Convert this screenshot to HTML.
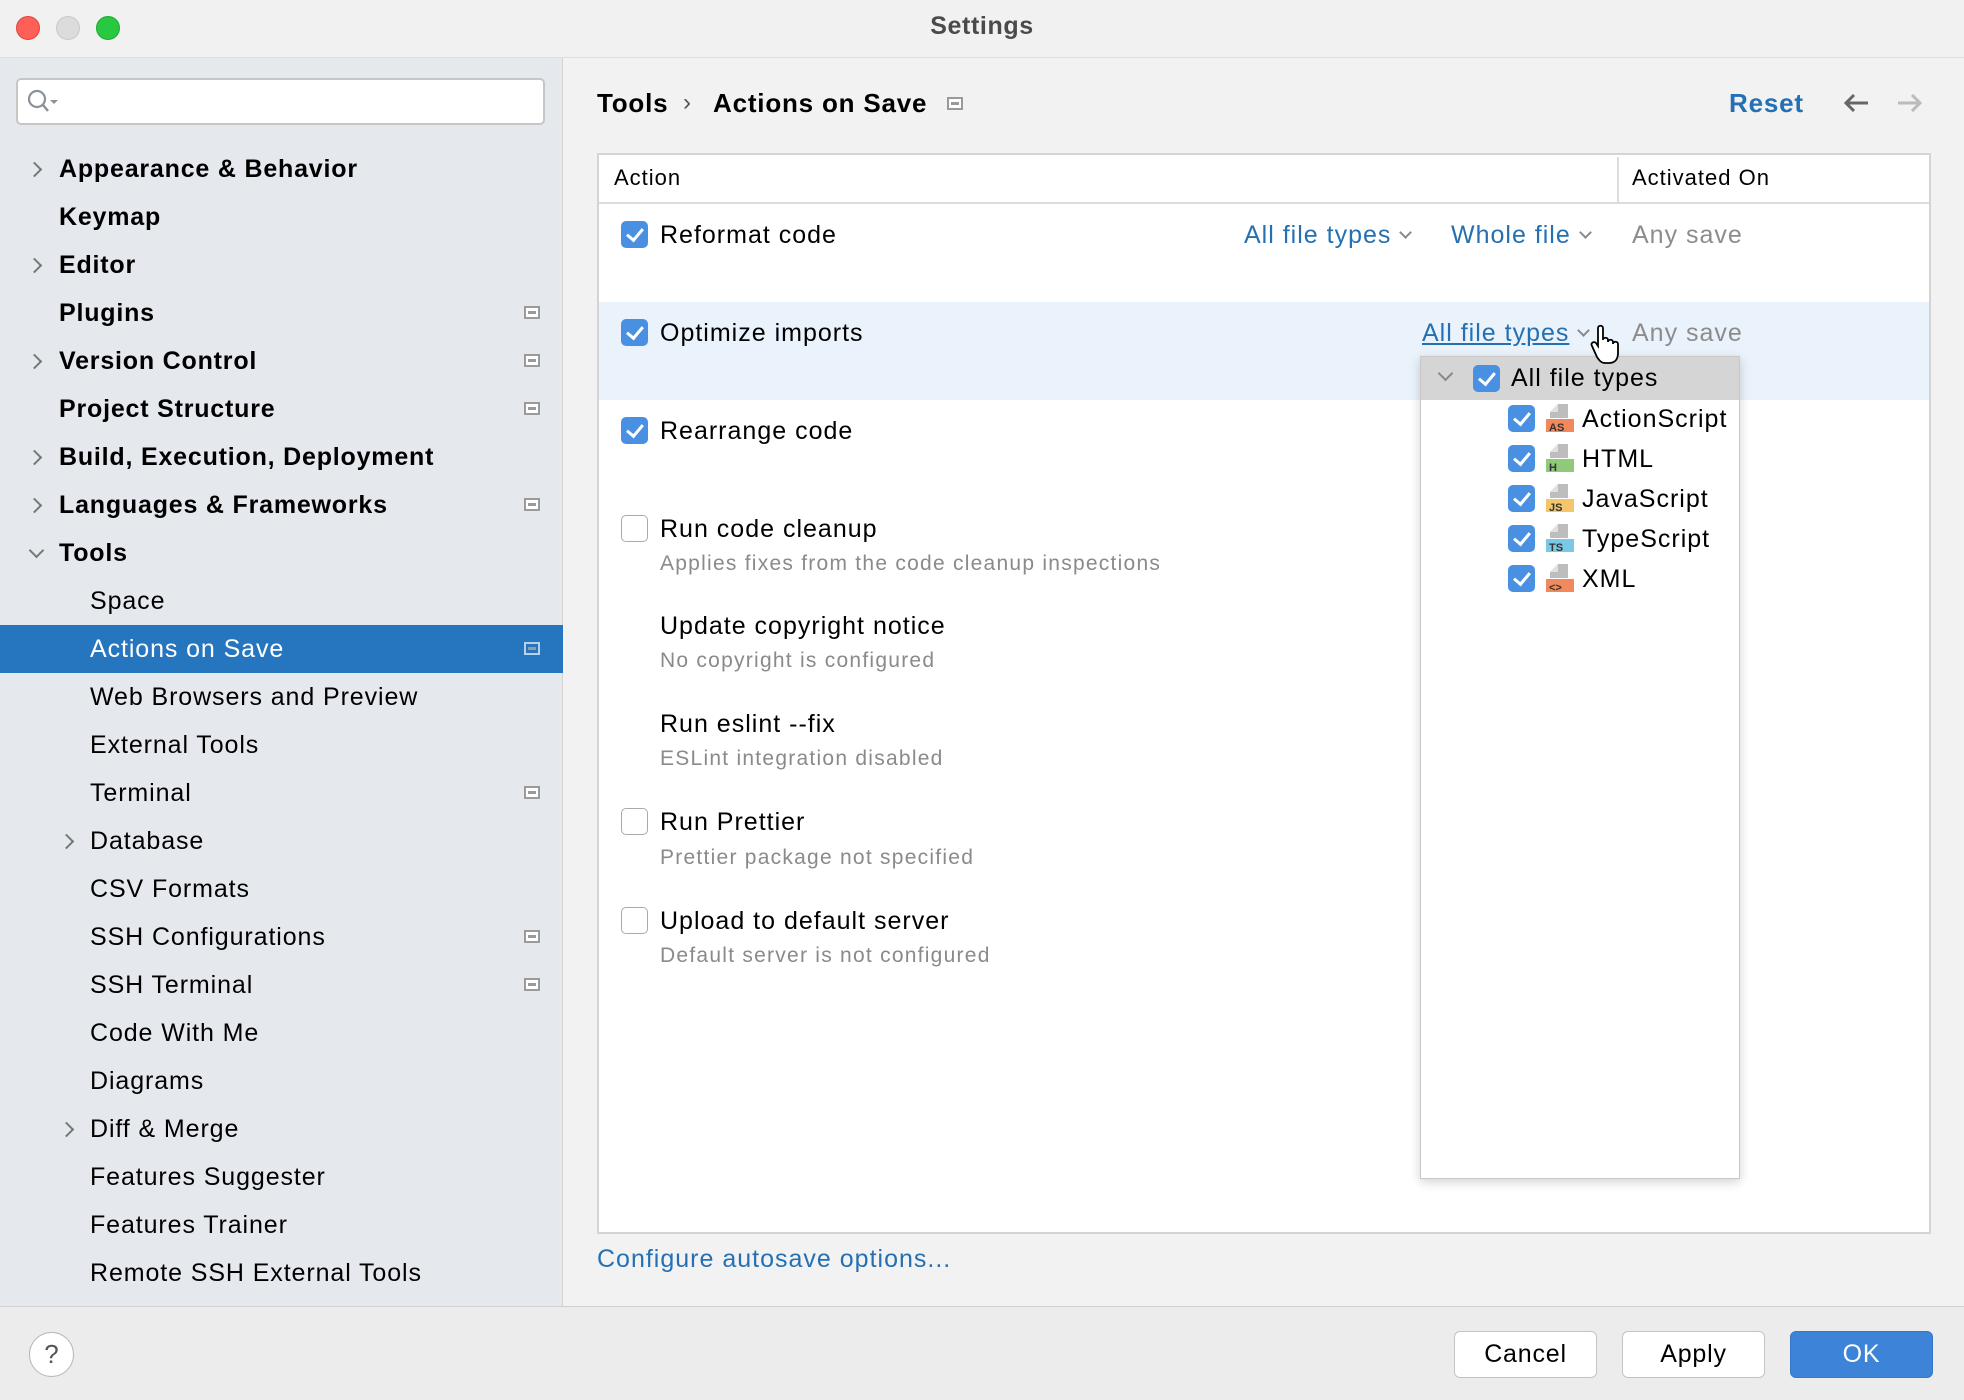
<!DOCTYPE html>
<html><head><meta charset="utf-8"><style>
*{margin:0;padding:0;box-sizing:border-box}
body{width:1964px;height:1400px;overflow:hidden;background:#f2f2f2;font-family:"Liberation Sans",sans-serif;position:relative;color:#000}
.a{position:absolute;white-space:nowrap}
.side{position:absolute;left:0;top:58px;width:563px;height:1248px;background:#e5e9ee;border-right:1px solid #d4d4d4}
.si{font-size:25px;line-height:40px;letter-spacing:0.9px}
.b{font-weight:bold;letter-spacing:0.8px}
.chev{position:absolute;width:11px;height:11px;border-right:2px solid #777;border-bottom:2px solid #777}
.ri{position:absolute;left:524px;width:16px;height:13px;border:2px solid #9a9a9a;background:#fff}
.ri::after{content:"";position:absolute;left:2px;right:2px;top:3px;height:3px;background:#9a9a9a}
.cb{position:absolute;width:27px;height:27px;border-radius:5px;background:#4a90e2}
.cb::after{content:"";position:absolute;left:9px;top:4px;width:7px;height:13px;border-right:3px solid #fff;border-bottom:3px solid #fff;transform:rotate(40deg)}
.cbo{position:absolute;width:27px;height:27px;border-radius:5px;background:#fff;border:1.5px solid #aaa}
.rt{font-size:25px;line-height:40px;letter-spacing:1px}
.sub{font-size:21px;color:#8a8a8a;line-height:30px;letter-spacing:1.25px}
.lnk{color:#2470b3;font-size:25px;line-height:40px;letter-spacing:1px}
.gray{color:#8c8c8c;font-size:25px;line-height:40px;letter-spacing:1px}
.dd{display:inline-block;width:9px;height:9px;border-right:2px solid #8a8a8a;border-bottom:2px solid #8a8a8a;transform:rotate(45deg);margin-left:10px;position:relative;top:-6px}
.btn{position:absolute;top:1331px;height:47px;width:143px;border:1px solid #c4c4c4;border-radius:6px;background:#fff;font-size:25px;text-align:center;line-height:45px;letter-spacing:0.8px}
.fi{position:absolute;width:28px;height:28px}
</style></head><body>
<div class="a" style="left:0;top:0;width:1964px;height:58px;background:#f1f1f1;border-bottom:1px solid #ddd"></div>
<div class="a" style="left:16px;top:16px;width:24px;height:24px;border-radius:50%;background:#fe5f57;border:1px solid #e0443e"></div>
<div class="a" style="left:56px;top:16px;width:24px;height:24px;border-radius:50%;background:#dcdcdc;border:1px solid #c8c8c8"></div>
<div class="a" style="left:96px;top:16px;width:24px;height:24px;border-radius:50%;background:#28c840;border:1px solid #1eaa33"></div>
<div class="a" style="left:0;width:1964px;top:8px;text-align:center;font-size:25px;font-weight:bold;color:#4a4a4a;line-height:36px;letter-spacing:0.6px">Settings</div>

<div class="side"></div>
<div class="a" style="left:16px;top:78px;width:529px;height:47px;background:#fff;border:2px solid #c6c6c6;border-radius:5px"></div>
<svg class="a" style="left:26px;top:88px" width="36" height="28" viewBox="0 0 36 28"><circle cx="11" cy="11" r="8" fill="none" stroke="#8a9299" stroke-width="2.2"/><line x1="17" y1="17" x2="22" y2="23" stroke="#8a9299" stroke-width="2.5"/><path d="M24 12h8l-4 4z" fill="#8a9299"/></svg>

<div class="a" style="left:0;top:625px;width:563px;height:48px;background:#2675bf"></div>

<div class="chev" style="left:29px;top:164px;transform:rotate(-45deg)"></div>
<div class="a si b" style="left:59px;top:149px">Appearance &amp; Behavior</div>
<div class="a si b" style="left:59px;top:197px">Keymap</div>
<div class="chev" style="left:29px;top:260px;transform:rotate(-45deg)"></div>
<div class="a si b" style="left:59px;top:245px">Editor</div>
<div class="a si b" style="left:59px;top:293px">Plugins</div><div class="ri" style="top:306px"></div>
<div class="chev" style="left:29px;top:356px;transform:rotate(-45deg)"></div>
<div class="a si b" style="left:59px;top:341px">Version Control</div><div class="ri" style="top:354px"></div>
<div class="a si b" style="left:59px;top:389px">Project Structure</div><div class="ri" style="top:402px"></div>
<div class="chev" style="left:29px;top:452px;transform:rotate(-45deg)"></div>
<div class="a si b" style="left:59px;top:437px">Build, Execution, Deployment</div>
<div class="chev" style="left:29px;top:500px;transform:rotate(-45deg)"></div>
<div class="a si b" style="left:59px;top:485px">Languages &amp; Frameworks</div><div class="ri" style="top:498px"></div>
<div class="chev" style="left:31px;top:545px;transform:rotate(45deg)"></div>
<div class="a si b" style="left:59px;top:533px">Tools</div>
<div class="a si" style="left:90px;top:581px">Space</div>
<div class="a si" style="left:90px;top:629px;color:#fff">Actions on Save</div><div class="ri" style="top:642px;border-color:#b8d0ea;background:#2675bf"></div>
<div class="a si" style="left:90px;top:677px">Web Browsers and Preview</div>
<div class="a si" style="left:90px;top:725px">External Tools</div>
<div class="a si" style="left:90px;top:773px">Terminal</div><div class="ri" style="top:786px"></div>
<div class="chev" style="left:61px;top:836px;transform:rotate(-45deg)"></div>
<div class="a si" style="left:90px;top:821px">Database</div>
<div class="a si" style="left:90px;top:869px">CSV Formats</div>
<div class="a si" style="left:90px;top:917px">SSH Configurations</div><div class="ri" style="top:930px"></div>
<div class="a si" style="left:90px;top:965px">SSH Terminal</div><div class="ri" style="top:978px"></div>
<div class="a si" style="left:90px;top:1013px">Code With Me</div>
<div class="a si" style="left:90px;top:1061px">Diagrams</div>
<div class="chev" style="left:61px;top:1124px;transform:rotate(-45deg)"></div>
<div class="a si" style="left:90px;top:1109px">Diff &amp; Merge</div>
<div class="a si" style="left:90px;top:1157px">Features Suggester</div>
<div class="a si" style="left:90px;top:1205px">Features Trainer</div>
<div class="a si" style="left:90px;top:1253px">Remote SSH External Tools</div>

<div class="a b" style="left:597px;top:83px;font-size:26px;line-height:40px">Tools</div>
<div class="a" style="left:683px;top:83px;font-size:24px;line-height:40px;color:#555">›</div>
<div class="a b" style="left:713px;top:83px;font-size:26px;line-height:40px">Actions on Save</div>
<div class="ri" style="left:947px;top:97px"></div>
<div class="a b" style="left:1729px;top:83px;font-size:26px;line-height:40px;color:#2470b3">Reset</div>
<svg class="a" style="left:1842px;top:92px" width="28" height="22" viewBox="0 0 28 22"><path d="M26 11H4M12 3l-8 8 8 8" fill="none" stroke="#666" stroke-width="3"/></svg>
<svg class="a" style="left:1896px;top:92px" width="28" height="22" viewBox="0 0 28 22"><path d="M2 11h22M16 3l8 8-8 8" fill="none" stroke="#bbb" stroke-width="3"/></svg>

<div class="a" style="left:597px;top:153px;width:1334px;height:1081px;background:#fff;border:2px solid #d4d4d4"></div>
<div class="a" style="left:599px;top:202px;width:1330px;height:2px;background:#dcdcdc"></div>
<div class="a" style="left:1617px;top:157px;width:2px;height:45px;background:#ddd"></div>
<div class="a" style="left:614px;top:158px;font-size:22px;line-height:40px;letter-spacing:1px">Action</div>
<div class="a" style="left:1632px;top:158px;font-size:22px;line-height:40px;letter-spacing:1px">Activated On</div>
<div class="a" style="left:599px;top:302px;width:1330px;height:98px;background:#eaf2fb"></div>

<div class="cb" style="left:621px;top:221px"></div><div class="a rt" style="left:660px;top:215px">Reformat code</div>
<div class="a lnk" style="left:1244px;top:215px">All file types<span class="dd"></span></div>
<div class="a lnk" style="left:1451px;top:215px">Whole file<span class="dd"></span></div>
<div class="a gray" style="left:1632px;top:215px">Any save</div>

<div class="cb" style="left:621px;top:319px"></div><div class="a rt" style="left:660px;top:313px">Optimize imports</div>
<div class="a lnk" style="left:1422px;top:313px;text-decoration:underline">All file types<span class="dd"></span></div>
<div class="a gray" style="left:1632px;top:313px">Any save</div>

<div class="cb" style="left:621px;top:417px"></div><div class="a rt" style="left:660px;top:411px">Rearrange code</div>
<div class="cbo" style="left:621px;top:515px"></div><div class="a rt" style="left:660px;top:509px">Run code cleanup</div>
<div class="a sub" style="left:660px;top:549px">Applies fixes from the code cleanup inspections</div>
<div class="a rt" style="left:660px;top:606px">Update copyright notice</div>
<div class="a sub" style="left:660px;top:646px">No copyright is configured</div>
<div class="a rt" style="left:660px;top:704px">Run eslint --fix</div>
<div class="a sub" style="left:660px;top:744px">ESLint integration disabled</div>
<div class="cbo" style="left:621px;top:808px"></div><div class="a rt" style="left:660px;top:802px">Run Prettier</div>
<div class="a sub" style="left:660px;top:843px">Prettier package not specified</div>
<div class="cbo" style="left:621px;top:907px"></div><div class="a rt" style="left:660px;top:901px">Upload to default server</div>
<div class="a sub" style="left:660px;top:941px">Default server is not configured</div>

<div class="a" style="left:1420px;top:356px;width:320px;height:823px;background:#fff;border:1px solid #c8c8c8;box-shadow:0 3px 10px rgba(0,0,0,.18)"></div>
<div class="a" style="left:1421px;top:357px;width:318px;height:43px;background:#d5d5d5"></div>
<div class="chev" style="left:1440px;top:368px;transform:rotate(45deg);border-color:#888"></div>
<div class="cb" style="left:1473px;top:365px"></div>
<div class="a rt" style="left:1511px;top:358px">All file types</div>
<div class="cb" style="left:1508px;top:405px"></div><div class="a rt" style="left:1582px;top:399px">ActionScript</div>
<div class="cb" style="left:1508px;top:445px"></div><div class="a rt" style="left:1582px;top:439px">HTML</div>
<div class="cb" style="left:1508px;top:485px"></div><div class="a rt" style="left:1582px;top:479px">JavaScript</div>
<div class="cb" style="left:1508px;top:525px"></div><div class="a rt" style="left:1582px;top:519px">TypeScript</div>
<div class="cb" style="left:1508px;top:565px"></div><div class="a rt" style="left:1582px;top:559px">XML</div>
<svg class="fi" style="left:1546px;top:404px" viewBox="0 0 28 28"><path d="M12 0h10v14H4V8z" fill="#bdbdbd"/><path d="M4 8l8-8v8z" fill="#e0e0e0"/><rect x="0" y="15" width="28" height="13" fill="#f2895b"/><text x="3" y="27" font-size="11" font-weight="bold" fill="#333" font-family="Liberation Sans">AS</text></svg>
<svg class="fi" style="left:1546px;top:444px" viewBox="0 0 28 28"><path d="M12 0h10v14H4V8z" fill="#bdbdbd"/><path d="M4 8l8-8v8z" fill="#e0e0e0"/><rect x="0" y="15" width="28" height="13" fill="#8fc97a"/><text x="3" y="27" font-size="11" font-weight="bold" fill="#333" font-family="Liberation Sans">H</text></svg>
<svg class="fi" style="left:1546px;top:484px" viewBox="0 0 28 28"><path d="M12 0h10v14H4V8z" fill="#bdbdbd"/><path d="M4 8l8-8v8z" fill="#e0e0e0"/><rect x="0" y="15" width="28" height="13" fill="#f5c56c"/><text x="3" y="27" font-size="11" font-weight="bold" fill="#333" font-family="Liberation Sans">JS</text></svg>
<svg class="fi" style="left:1546px;top:524px" viewBox="0 0 28 28"><path d="M12 0h10v14H4V8z" fill="#bdbdbd"/><path d="M4 8l8-8v8z" fill="#e0e0e0"/><rect x="0" y="15" width="28" height="13" fill="#79c8e6"/><text x="3" y="27" font-size="11" font-weight="bold" fill="#333" font-family="Liberation Sans">TS</text></svg>
<svg class="fi" style="left:1546px;top:564px" viewBox="0 0 28 28"><path d="M12 0h10v14H4V8z" fill="#bdbdbd"/><path d="M4 8l8-8v8z" fill="#e0e0e0"/><rect x="0" y="15" width="28" height="13" fill="#f2895b"/><text x="3" y="27" font-size="11" font-weight="bold" fill="#333" font-family="Liberation Sans">&lt;&gt;</text></svg>
<svg class="a" style="left:1590px;top:324px" width="32" height="40" viewBox="0 0 32 40"><path d="M8 4c0-3 5-3 5 0v12c0-3 5-3 5 0v2c0-3 5-3 5 0v2c0-3 5-3 5 0v9c0 6-3 10-9 10h-4c-4 0-6-3-8-6L2 22c-2-3 2-5 4-3l2 3z" fill="#fff" stroke="#000" stroke-width="1.8"/></svg>

<div class="a lnk" style="left:597px;top:1239px">Configure autosave options...</div>

<div class="a" style="left:0;top:1306px;width:1964px;height:94px;background:#ececec;border-top:1px solid #d0d0d0"></div>
<div class="a" style="left:29px;top:1332px;width:45px;height:45px;border-radius:50%;background:#fff;border:1.5px solid #b8b8b8;text-align:center;font-size:26px;line-height:42px;color:#555">?</div>
<div class="btn" style="left:1454px">Cancel</div>
<div class="btn" style="left:1622px">Apply</div>
<div class="btn" style="left:1790px;background:#3d84d8;border-color:#3578c7;color:#fff">OK</div>
</body></html>
